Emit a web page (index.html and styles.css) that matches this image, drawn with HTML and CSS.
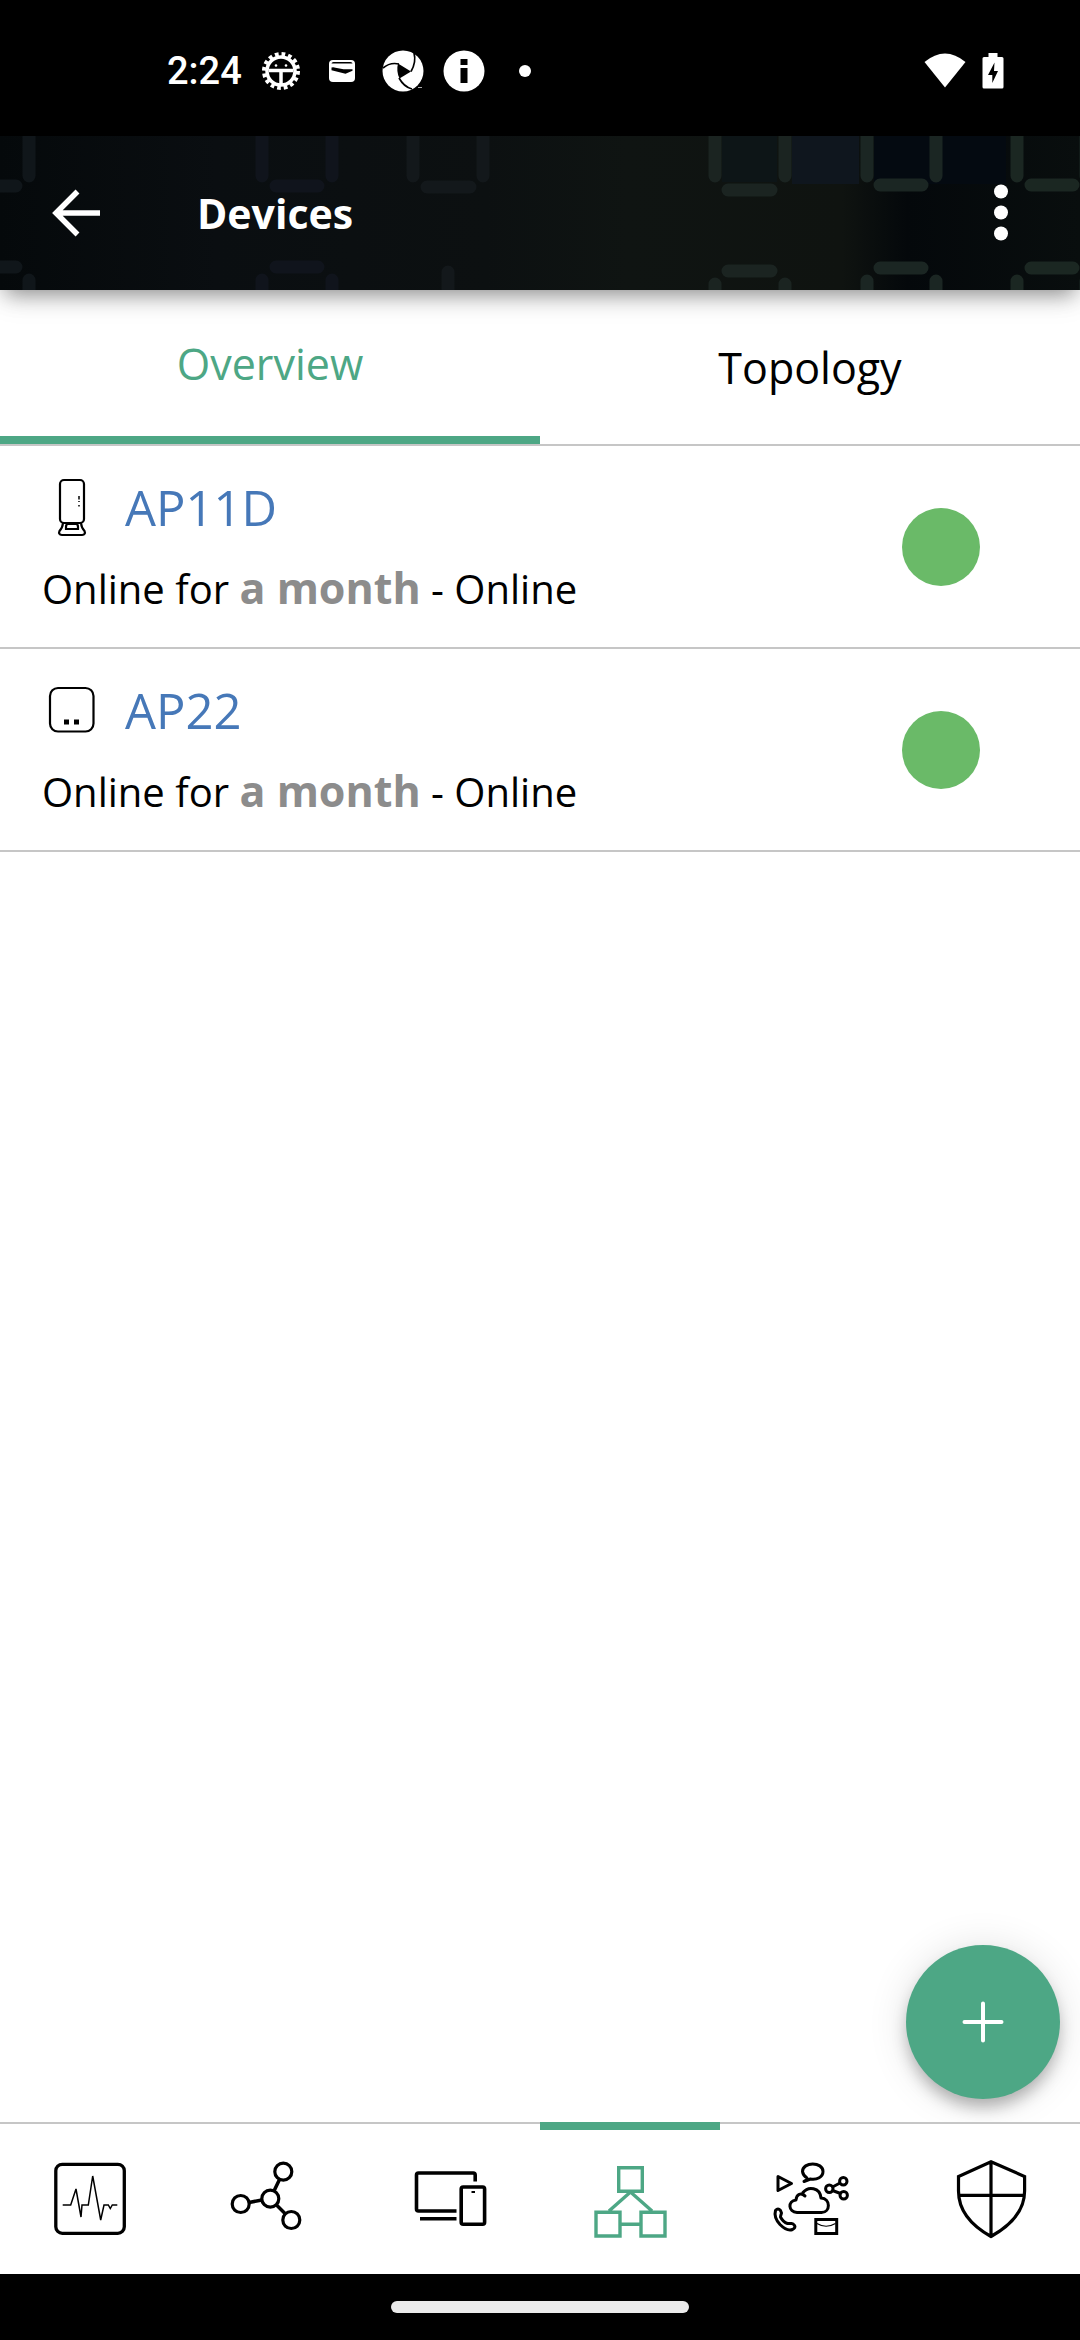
FILE: index.html
```html
<!DOCTYPE html>
<html lang="en">
<head>
<meta charset="utf-8">
<meta name="viewport" content="width=device-width, initial-scale=1">
<title>Devices</title>
<link rel="stylesheet" href="styles.css">
</head>
<body>
<div class="status-bar">
  <div class="status-group">
    <time class="clock">2:24</time>
    <svg class="status-icon" viewBox="0 0 44 44" aria-hidden="true">
      <circle cx="22" cy="22" r="17" fill="none" stroke="#fff" stroke-width="4" stroke-dasharray="3.7 2.98"/>
      <circle cx="22" cy="22" r="14" fill="none" stroke="#fff" stroke-width="3.500"/>
      <path d="M10 21.500H34M22 22V35" stroke="#fff" stroke-width="3.500"/>
      <circle cx="17" cy="16.500" r="1.300" fill="#fff"/><circle cx="27" cy="16.500" r="1.300" fill="#fff"/>
    </svg>
    <svg class="status-icon" viewBox="0 0 44 44" aria-hidden="true">
      <rect x="9" y="11" width="26" height="22" rx="4" fill="#fff"/>
      <path d="M11.500 14.500q0-1.500 2-1.500h17q2 0 2 1.500zM11.500 18.500q2-.6 4 .2l8 1.500h9v1.500l-7 3-14-3.500z" fill="#000"/>
    </svg>
    <svg class="status-icon" viewBox="0 0 44 44" aria-hidden="true">
      <circle cx="22" cy="22" r="20.500" fill="#fff"/>
      <path d="M17 14.500L30 22.500L18.500 29.500Q15 22 17 14.500Z" fill="#000"/>
      <path d="M2 19Q9 13 18 15M33 4Q35.500 13 30 22.500M18 29Q23 38 31 40" fill="none" stroke="#000" stroke-width="1.700"/>
      <path d="M37 38.500h4" stroke="#aaa"/>
    </svg>
    <svg class="status-icon" viewBox="0 0 44 44" aria-hidden="true">
      <circle cx="22" cy="22" r="20.500" fill="#fff"/>
      <path d="M18.500 10h7v6h-7zM18.500 19h7v15h-7z" fill="#000"/>
    </svg>
    <svg class="status-icon" viewBox="0 0 44 44" aria-hidden="true"><circle cx="22" cy="22" r="6" fill="#fff"/></svg>
  </div>
  <div class="status-group status-system">
    <svg class="status-icon" viewBox="0 0 44 44" aria-hidden="true"><path d="M1.500 13Q22-4 42.500 13L22 38.500Z" fill="#fff"/></svg>
    <svg class="status-icon" viewBox="0 0 44 44" aria-hidden="true">
      <path d="M17.500 4h9v4H31q1.500 0 1.500 1.500V38q0 1.500-1.500 1.500H13q-1.500 0-1.500-1.500V9.500Q11.500 8 13 8h4.500z" fill="#fff"/>
      <path d="M23.500 13.500L17 26h4.300v8L27 22h-4z" fill="#000"/>
    </svg>
  </div>
</div>

<header class="app-bar">
  <svg class="app-bar-art" viewBox="0 0 1080 154" preserveAspectRatio="xMidYMid slice" aria-hidden="true">
    <defs>
      <linearGradient id="base"><stop offset="0" stop-color="#05090b"/><stop offset=".2" stop-color="#0a0e11"/><stop offset=".45" stop-color="#0c1011"/><stop offset=".58" stop-color="#0f1412"/><stop offset=".78" stop-color="#0f1310"/><stop offset=".84" stop-color="#04080b"/><stop offset="1" stop-color="#090e0e"/></linearGradient>
    </defs>
    <rect width="1080" height="154" fill="url(#base)"/>
    <rect x="722" width="55" height="46" fill="#0d1517"/>
    <rect x="792" width="67" height="48" fill="#0f161e"/>
    <rect x="874" width="132" height="48" fill="#040a11"/>
    <g fill="none" stroke-width="13" stroke-linecap="round">
      <path stroke="#10161a" d="M29-9V40M-9 50H16M-9 131H16M29 144V170"/>
      <path stroke="#10141c" d="M262-9V40M332-9V40M276 50H318M276 131H318M262 144V170M332 144V170"/>
      <path stroke="#13181b" d="M413-9V40M483-9V40M427 51H470M448 136V170"/>
      <path stroke="#1b2421" d="M715-9V40M785-9V40M728 54H771M728 135H771M715 148V170M785 148V170"/>
      <path stroke="#1b2623" d="M867-9V40M936-9V40M880 49H922M880 132H922M867 145V170M936 145V170"/>
      <path stroke="#1b2722" d="M1017-9V40M1086-9V40M1031 49H1073M1031 132H1073M1017 145V170M1086 145V170"/>
    </g>
  </svg>
  <button class="icon-button" type="button" aria-label="Back">
    <svg viewBox="0 0 48 48"><path d="M47 24H4M24.500 2.500L3 24L24.500 45.500" fill="none" stroke="#fff" stroke-width="5.500"/></svg>
  </button>
  <h1 class="app-title">Devices</h1>
  <button class="icon-button" type="button" aria-label="More options">
    <svg viewBox="0 0 48 48" fill="#fff"><circle cx="24" cy="2.500" r="7"/><circle cx="24" cy="23.500" r="7"/><circle cx="24" cy="44.500" r="7"/></svg>
  </button>
</header>

<nav class="tabs" aria-label="Views">
  <a class="tab tab-active" href="#overview" aria-current="page">Overview</a>
  <a class="tab" href="#topology">Topology</a>
</nav>

<main class="content" id="overview">
  <ul class="device-list">
    <li class="device">
      <div class="device-info">
        <a class="device-name" href="#ap11d">
          <svg class="device-icon" viewBox="0 0 60 60" fill="none" stroke="#000" stroke-width="2.200" aria-hidden="true">
            <rect x="18" y="3" width="24" height="43" rx="4"/>
            <path d="M21 46Q20.500 51 17.500 54Q16 57.500 20 58H40Q44 57.500 42.500 54Q39.500 51 39 46M24 50Q24 47 26 47H34Q36 47 36 50V52H24Z"/>
            <path d="M37 19v3.500M37 24v1M37 28v1.500" stroke-width="1.500"/>
          </svg>
          AP11D</a>
        <p class="device-status">Online for <strong class="uptime">a month</strong> - Online</p>
      </div>
      <span class="health" role="img" aria-label="Healthy"></span>
    </li>
    <li class="device">
      <div class="device-info">
        <a class="device-name" href="#ap22">
          <svg class="device-icon" viewBox="0 0 60 60" aria-hidden="true">
            <rect x="8" y="8" width="43.500" height="43.500" rx="8" fill="none" stroke="#000" stroke-width="2.200"/>
            <path d="M22 39.500h5v5h-5zM32 39.500h5v5h-5z"/>
          </svg>
          AP22</a>
        <p class="device-status">Online for <strong class="uptime">a month</strong> - Online</p>
      </div>
      <span class="health" role="img" aria-label="Healthy"></span>
    </li>
  </ul>
  <button class="add-button" type="button" aria-label="Add device">
    <svg viewBox="0 0 44 44"><path d="M22 3.500V40.500M3.500 22H40.500" stroke="#fff" stroke-width="4" stroke-linecap="round"/></svg>
  </button>
</main>

<nav class="bottom-nav" aria-label="Main">
  <a class="nav-item" href="#health" aria-label="Health">
    <svg viewBox="0 0 90 90"><rect x="10.800" y="10.300" width="68.500" height="69" rx="6.500" stroke-width="3.300"/><path stroke-width="1.500" d="M17.700 51H25.700L31 35L36 63L37 51H43.300L47.700 22L55.700 66L59 51H63.300L65.300 54.500L67.300 51H72.300"/></svg>
  </a>
  <a class="nav-item" href="#networks" aria-label="Networks">
    <svg viewBox="0 0 90 90" stroke-width="3.200"><circle cx="58.300" cy="17.700" r="8.500"/><circle cx="45.300" cy="44.700" r="8.500"/><circle cx="15.700" cy="50" r="8.500"/><circle cx="66.300" cy="66" r="8.500"/><path stroke-width="3.500" d="M54.500 25.500L49 37M24 48.500L37 46M51.500 51L60 59.500"/></svg>
  </a>
  <a class="nav-item" href="#clients" aria-label="Clients">
    <svg viewBox="0 0 90 90" stroke-width="3.600"><path d="M70.200 27.500V21q0-2-2-2H13.500q-2 0-2 2V55q0 2 2 2H51.500M15 64.700H51.500"/><rect x="56.200" y="33" width="23.400" height="37.300" rx="2"/><path stroke-width="2" d="M66.500 38H70"/></svg>
  </a>
  <a class="nav-item nav-active" href="#devices" aria-label="Devices" aria-current="page">
    <svg viewBox="0 0 90 90" stroke-width="3.400"><path d="M33.700 13.700H57.300V37.300H33.700ZM11 58.300H35V82H11ZM56 58.300H80V82H56ZM24 57L45.500 38L67 57M36 70.300H55"/></svg>
  </a>
  <a class="nav-item" href="#applications" aria-label="Applications">
    <svg viewBox="0 0 90 90" stroke-width="3" stroke-linejoin="round">
      <path d="M13 22.500L26.500 29.500L13 36.500Z"/>
      <path d="M42 24Q38 21.500 37.500 17.500C37.500 7.500 58 7.500 58 17.500C58 23 52 26 45.500 25L39 27.500Q42.500 26 42 24Z"/>
      <circle cx="78.300" cy="27.300" r="3.700"/><circle cx="64.300" cy="34.700" r="3.700"/><circle cx="78.700" cy="41.300" r="3.700"/><path d="M67.500 33L75 29M67.500 36.500L75.500 39.500"/>
      <path d="M32 58.500C23 58 22.500 47 31 46C31.500 40 36 38.500 40 42C37.500 40 37.500 39.500 38 38.500C43 32 55 33 56 44C66 44.500 65.500 58.500 56.500 58.500Z"/>
      <path d="M10.500 56.500Q13 53.500 15.500 56.500L16.500 59Q15.500 62 15.500 63Q18 68 22.500 69.500L26 69.500Q28 69 29.500 71.500Q31 73.500 27.500 75.500Q22 77.500 15 70.500Q8.500 63.500 10.500 56.500Z"/>
      <path stroke-linejoin="miter" d="M50.800 65.500H71.700V79.500H50.800Z"/><path stroke-width="1.200" d="M52 69.500Q61 75 70.500 69.500"/>
    </svg>
  </a>
  <a class="nav-item" href="#security" aria-label="Security">
    <svg viewBox="0 0 90 90" stroke-width="3.200"><path d="M46 7.800L79.600 22.500V37C79.600 58 63 73 46 82.500C29 73 13.500 58 13.500 37V22.500ZM46 8V82M14 41.300H79"/></svg>
  </a>
</nav>
<div class="gesture-bar"><span class="gesture-handle"></span></div>
</body>
</html>
```
FILE: styles.css
```css
* {
  box-sizing: border-box;
}

body {
  margin: 0;
  min-height: 100vh;
  display: flex;
  flex-direction: column;
  background: #fff;
  color: #000;
  font-family: "Open Sans", "Noto Sans", sans-serif;
  font-size: 43px;
}

a {
  color: inherit;
  text-decoration: none;
}

button {
  border: 0;
  padding: 0;
  background: none;
  cursor: pointer;
}

svg {
  display: block;
  overflow: visible;
}

/* System status bar */
.status-bar {
  display: flex;
  justify-content: space-between;
  align-items: center;
  height: 136px;
  padding: 6px 65px 0 167px;
  background: #000;
  color: #fff;
}

.status-group {
  display: flex;
  align-items: center;
  gap: 17px;
}

.status-system {
  gap: 4px;
}

.clock {
  font-family: Roboto, sans-serif;
  font-size: 38px;
  font-weight: 500;
}

.status-icon {
  width: 44px;
  height: 44px;
}

/* App bar */
.app-bar {
  position: relative;
  z-index: 1;
  display: flex;
  align-items: center;
  height: 154px;
  padding: 0 55px 0 53px;
  background: #0b0f12;
  color: #fff;
  box-shadow: 0 10px 20px -6px rgba(0, 0, 0, 0.4), 0 4px 32px rgba(0, 0, 0, 0.12);
}

.app-bar-art {
  position: absolute;
  inset: 0;
  width: 100%;
  height: 100%;
  overflow: hidden;
}

.icon-button {
  position: relative;
  width: 48px;
  height: 48px;
}

.app-title {
  position: relative;
  flex: 1;
  margin: 0;
  padding-left: 96px;
  font-size: 41px;
  font-weight: 700;
}

/* View tabs */
.tabs {
  display: flex;
  height: 156px;
  border-bottom: 2px solid #c6c6c6;
}

.tab {
  flex: 1;
  display: flex;
  align-items: center;
  justify-content: center;
}

.tab-active {
  border-bottom: 8px solid #4da785;
  color: #4da785;
}

/* Device list */
.content {
  position: relative;
  flex: 1;
  overflow: hidden;
}

.device-list {
  margin: 0;
  padding: 0;
  list-style: none;
}

.device {
  display: flex;
  align-items: center;
  justify-content: space-between;
  padding: 17px 100px 16px 42px;
  border-bottom: 2px solid #c6c6c6;
}

.device-info {
  padding-top: 4px;
}

.device-name {
  display: flex;
  align-items: center;
  gap: 23px;
  color: #4678b8;
  font-size: 49px;
  line-height: 80px;
}

.device-icon {
  width: 60px;
  height: 60px;
}

.device-status {
  margin: 0;
  font-size: 40px;
  line-height: 84px;
}

.uptime {
  color: #8c8c8c;
  font-size: 43px;
  font-weight: 700;
  line-height: 1;
}

.health {
  width: 78px;
  height: 78px;
  border-radius: 50%;
  background: #6aba68;
}

.add-button {
  position: absolute;
  right: 20px;
  bottom: 23px;
  display: flex;
  align-items: center;
  justify-content: center;
  width: 154px;
  height: 154px;
  border-radius: 50%;
  background: #4da785;
  box-shadow: 0 10px 16px -2px rgba(0, 0, 0, 0.28), 0 2px 40px rgba(0, 0, 0, 0.12);
}

.add-button svg {
  width: 44px;
  height: 44px;
}

/* Bottom navigation */
.bottom-nav {
  display: flex;
  height: 152px;
  border-top: 2px solid #c6c6c6;
}

.nav-item {
  flex: 1;
  display: flex;
  align-items: center;
  justify-content: center;
}

.nav-item svg {
  width: 90px;
  height: 90px;
  fill: none;
  stroke: currentColor;
}

.nav-active {
  margin-top: -2px;
  padding-bottom: 6px;
  border-top: 8px solid #4da785;
  color: #4da785;
}

.gesture-bar {
  display: flex;
  align-items: center;
  justify-content: center;
  height: 66px;
  background: #000;
}

.gesture-handle {
  width: 298px;
  height: 12px;
  border-radius: 6px;
  background: #ebebeb;
}
```
